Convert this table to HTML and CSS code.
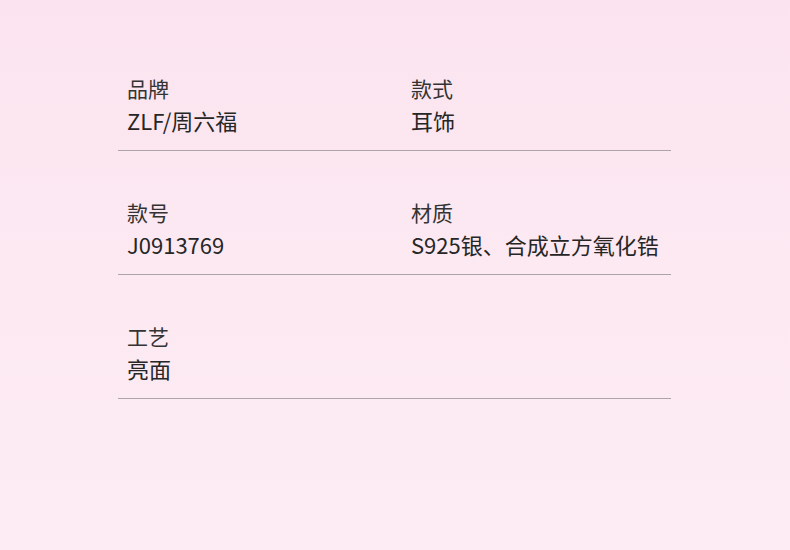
FILE: index.html
```html
<!DOCTYPE html>
<html lang="zh">
<head>
<meta charset="utf-8">
<link rel="stylesheet" href="styles.css">
</head>
<body>
<div class="page">
  <div class="table">
    <div class="row">
      <div class="cell"><div class="label">品牌</div><div class="value">ZLF/周六福</div></div>
      <div class="cell"><div class="label">款式</div><div class="value">耳饰</div></div>
    </div>
    <div class="row">
      <div class="cell"><div class="label">款号</div><div class="value">J0913769</div></div>
      <div class="cell"><div class="label">材质</div><div class="value">S925银、合成立方氧化锆</div></div>
    </div>
    <div class="row">
      <div class="cell"><div class="label">工艺</div><div class="value">亮面</div></div>
    </div>
  </div>
</div>
</body>
</html>
```
FILE: styles.css
```css
html, body {
  margin: 0;
  padding: 0;
}
body {
  width: 790px;
  height: 550px;
  overflow: hidden;
  background: linear-gradient(180deg, #fbe4ef 0%, #fce9f2 50%, #fdecf4 100%);
  font-family: "Noto Sans CJK SC", "Noto Sans", sans-serif;
  color: #333333;
}
.page {
  padding: 27px 119px 0 118px;
}
.table {
  display: flex;
  flex-direction: column;
}
.row {
  display: grid;
  grid-template-columns: 284px 1fr;
  padding: 45px 0 14px 9px;
  border-bottom: 1px solid #aca4a8;
}
.label {
  font-size: 21px;
  line-height: 32px;
  color: #333333;
}
.value {
  font-size: 22px;
  line-height: 32px;
  color: #262626;
}
```
